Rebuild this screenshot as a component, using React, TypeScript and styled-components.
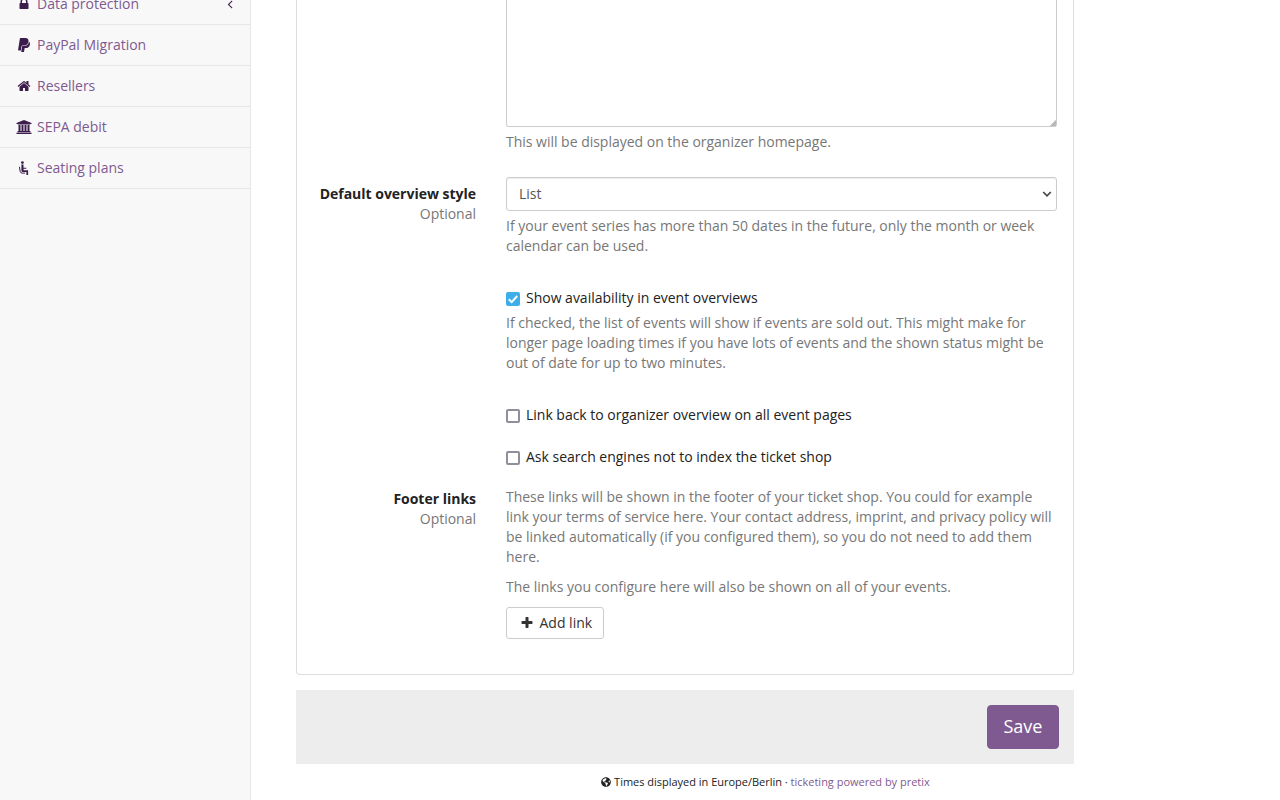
import React from "react";
import styled, { createGlobalStyle } from "styled-components";
import { FaGlobeAmericas } from "react-icons/fa";

const Global = createGlobalStyle`
  *, *::before, *::after { box-sizing: border-box; }
  body {
    margin: 0;
    background: #fff;
    color: #222;
    font: 14px/20px "Open Sans", "Noto Sans", sans-serif;
    letter-spacing: -0.012px;
  }
`;

const Page = styled.div`
  display: flex;
  height: 800px;
  overflow: hidden;
`;

const Sidebar = styled.nav`
  flex: 0 0 251px;
  background: #f8f8f8;
  border-right: 1px solid #e7e7e7;
`;

const NavItem = styled.a<{ $clipped?: boolean }>`
  display: flex;
  align-items: center;
  height: 41px;
  margin-top: ${(p) => (p.$clipped ? "-16px" : "0")};
  padding: 0 13px 0 15px;
  border-bottom: 1px solid #e7e7e7;
  color: #7f5a91;
  text-decoration: none;
`;

const NavIcon = styled.span`
  display: flex;
  justify-content: center;
  width: 18px;
  margin-right: 4px;
  color: #3b1c4a;
`;

const NavArrow = styled.span`
  display: flex;
  margin-left: auto;
  color: #3b1c4a;
`;

const Main = styled.main`
  flex: 1;
  padding-left: 45px;
`;

const Panel = styled.section`
  width: 778px;
  height: 675px;
  padding-right: 16px;
  border: 1px solid #ddd;
  border-top: 0;
  border-radius: 0 0 4px 4px;
`;

const Row = styled.div<{ $h: number }>`
  display: grid;
  grid-template-columns: 179px 551px;
  column-gap: 30px;
  height: ${(p) => p.$h}px;
`;

const Label = styled.div<{ $top: number }>`
  padding-top: ${(p) => p.$top}px;
  text-align: right;
  font-weight: 700;
`;

const Optional = styled.div`
  color: #777;
  font-weight: 400;
`;

const Field = styled.div`
  grid-column: 2;
`;

const TextBox = styled.div`
  position: relative;
  height: 127px;
`;

const TextArea = styled.textarea`
  display: block;
  width: 100%;
  height: 100%;
  border: 1px solid #ccc;
  border-top: 0;
  border-radius: 0 0 3px 3px;
  resize: none;
  background: #fff;
`;

const Grip = styled.svg`
  position: absolute;
  right: 1px;
  bottom: 1px;
`;

const Help = styled.p<{ $top?: number }>`
  margin: ${(p) => p.$top ?? 5}px 0 0;
  color: #777;
`;

const Select = styled.div`
  display: flex;
  align-items: center;
  justify-content: space-between;
  height: 34px;
  padding: 0 4px 0 12px;
  border: 1px solid #ccc;
  border-radius: 3px;
  box-shadow: inset 0 1px 1px rgba(0, 0, 0, 0.075);
  color: #555;
`;

const CheckLabel = styled.label`
  display: flex;
  align-items: center;
  gap: 6px;
  height: 20px;
`;

const Box = styled.span<{ $on?: boolean }>`
  display: flex;
  width: 14px;
  height: 14px;
  margin-top: 2px;
  border: ${(p) => (p.$on ? "0" : "2px solid #8f8f9d")};
  border-radius: 2px;
  background: ${(p) => (p.$on ? "#3daee9" : "#fff")};
`;

const AddButton = styled.button`
  display: flex;
  align-items: center;
  gap: 5.5px;
  width: 98px;
  height: 32px;
  margin-top: 10px;
  padding: 0 0 0 13px;
  border: 1px solid #ccc;
  border-radius: 3px;
  background: #fff;
  color: #333;
  font: inherit;
`;

const SaveBar = styled.div`
  display: flex;
  justify-content: flex-end;
  width: 778px;
  height: 74px;
  margin-top: 15px;
  padding: 15px;
  background: #ededed;
`;

const SaveButton = styled.button`
  width: 72px;
  height: 44px;
  padding: 0 0 2px;
  border: 1px solid #7f5a91;
  border-radius: 4px;
  background: #7f5a91;
  color: #fff;
  font: 18px/24px "Open Sans", "Noto Sans", sans-serif;
`;

const Footer = styled.footer`
  display: flex;
  align-items: center;
  justify-content: center;
  height: 18px;
  margin-top: 9px;
  padding-right: 45px;
  font-size: 11px;
  white-space: pre;
`;

const FooterLink = styled.a`
  color: #7f5a91;
`;

const Glyph = ({ d, size = 14, box = 1792 }: { d: string; size?: number; box?: number }) => (
  <svg width={size} height={14} viewBox={`0 0 ${box} 1792`} fill="currentColor">
    <path d={d} />
  </svg>
);

const LOCK =
  "M640 768h512v-192q0-106-75-181t-181-75-181 75-75 181v192zm832 96v576q0 40-28 68t-68 28h-960q-40 0-68-28t-28-68v-576q0-40 28-68t68-28h32v-192q0-184 132-316t316-132 316 132 132 316v192h32q40 0 68 28t28 68z";
const PAYPAL =
  "M1647 646q18 84-4 204-87 444-565 444h-44q-25 0-44 16.5t-24 42.5l-4 19-55 346-2 15q-5 26-24.5 42.5t-44.5 16.5h-251q-21 0-33-15t-9-36q9-56 26.5-168t26.5-168 27-167.5 27-167.5q5-37 43-37h131q133 2 236-21 175-39 287-144 102-95 155-246 24-70 35-133 1-6 2.5-7.5t3.5-1 6 3.5q79 59 98 162zm-172-282q0 107-46 236-80 233-302 315-113 40-252 42 0 1-90 1l-90-1q-100 0-118 96-2 8-85 530-1 10-12 10h-295q-22 0-36.5-16.5t-11.5-38.5l232-1471q5-29 27.5-48t51.5-19h598q34 0 97.5 13t111.5 32q107 41 163.5 123t56.5 196z";
const HOME =
  "M1472 992v480q0 26-19 45t-45 19h-384v-384h-256v384h-384q-26 0-45-19t-19-45v-480q0-1 .5-3t.5-3l575-474 575 474q1 2 1 6zm223-69l-62 74q-8 9-21 11h-3q-13 0-21-7l-692-577-692 577q-12 8-24 7-13-2-21-11l-62-74q-8-10-7-23.5t11-21.5l719-599q32-26 76-26t76 26l244 204v-195q0-14 9-23t23-9h192q14 0 23 9t9 23v408l219 182q10 8 11 21.5t-7 23.5z";
const BANK =
  "M960 0l960 384v128h-128q0 26-20.5 45t-48.5 19h-1526q-28 0-48.5-19t-20.5-45h-128v-128zm-704 640h256v768h128v-768h256v768h128v-768h256v768h128v-768h256v768h59q28 0 48.5 19t20.5 45v64h-1664v-64q0-26 20.5-45t48.5-19h59v-768zm1595 960q28 0 48.5 19t20.5 45v128h-1920v-128q0-26 20.5-45t48.5-19h1782z";
const PLUS =
  "M1600 736v192q0 40-28 68t-68 28h-416v416q0 40-28 68t-68 28h-192q-40 0-68-28t-28-68v-416h-416q-40 0-68-28t-28-68v-192q0-40 28-68t68-28h416v-416q0-40 28-68t68-28h192q40 0 68 28t28 68v416h416q40 0 68 28t28 68z";
const ANGLE =
  "M1203 544q0 13-10 23l-393 393 393 393q10 10 10 23t-10 23l-50 50q-10 10-23 10t-23-10l-466-466q-10-10-10-23t10-23l466-466q10-10 23-10t23 10l50 50q10 10 10 23z";

const Seat = () => (
  <svg width="16" height="14" viewBox="0 0 16 14" fill="none" stroke="currentColor">
    <circle cx="6.4" cy="1.6" r="1.4" fill="currentColor" stroke="none" />
    <path d="M5.4 3.6h2.1v3.2h2.8v1H7.6v1.4h4.5v5h-1.7v-3.1H6.9q-1.5 0-1.5-1.6z" fill="currentColor" stroke="none" />
    <path d="M3.4 5.8l.8 4.6q.3 1.7 1.9 1.7h3" strokeWidth="1" />
  </svg>
);

export default function App() {
  return (
    <>
      <Global />
      <Page>
        <Sidebar>
          <NavItem $clipped>
            <NavIcon><Glyph d={LOCK} /></NavIcon>
            Data protection
            <NavArrow><Glyph d={ANGLE} /></NavArrow>
          </NavItem>
          <NavItem>
            <NavIcon><Glyph d={PAYPAL} /></NavIcon>
            PayPal Migration
          </NavItem>
          <NavItem>
            <NavIcon><Glyph d={HOME} /></NavIcon>
            Resellers
          </NavItem>
          <NavItem>
            <NavIcon><Glyph d={BANK} size={16} box={1920} /></NavIcon>
            SEPA debit
          </NavItem>
          <NavItem>
            <NavIcon><Seat /></NavIcon>
            Seating plans
          </NavItem>
        </Sidebar>
        <Main>
          <Panel>
            <Row $h={177}>
              <Field>
                <TextBox>
                  <TextArea />
                  <Grip width="7" height="7" viewBox="0 0 7 7">
                    <path d="M7 0.5V7H0.5z" fill="#c4c4c4" />
                    <path d="M3 7L7 3M5.5 7L7 5.5" stroke="#999" strokeWidth="0.7" />
                  </Grip>
                </TextBox>
                <Help>This will be displayed on the organizer homepage.</Help>
              </Field>
            </Row>
            <Row $h={111}>
              <Label $top={7}>
                Default overview style
                <Optional>Optional</Optional>
              </Label>
              <Field>
                <Select>
                  List
                  <svg width="10" height="8" viewBox="0 0 10 8" fill="none" stroke="#444" strokeWidth="1.7">
                    <path d="M1.2 2L5 5.8 8.8 2" />
                  </svg>
                </Select>
                <Help>
                  If your event series has more than 50 dates in the future, only the month or week
                  <br />
                  calendar can be used.
                </Help>
              </Field>
            </Row>
            <Row $h={117}>
              <Field>
                <CheckLabel>
                  <Box $on>
                    <svg width="14" height="14" viewBox="0 0 14 14" fill="none" stroke="#fff" strokeWidth="2">
                      <path d="M2.8 7.2l2.9 2.9L11.2 4" />
                    </svg>
                  </Box>
                  Show availability in event overviews
                </CheckLabel>
                <Help>
                  If checked, the list of events will show if events are sold out. This might make for
                  <br />
                  longer page loading times if you have lots of events and the shown status might be
                  <br />
                  out of date for up to two minutes.
                </Help>
              </Field>
            </Row>
            <Row $h={42}>
              <Field>
                <CheckLabel><Box />Link back to organizer overview on all event pages</CheckLabel>
              </Field>
            </Row>
            <Row $h={40}>
              <Field>
                <CheckLabel><Box />Ask search engines not to index the ticket shop</CheckLabel>
              </Field>
            </Row>
            <Row $h={152}>
              <Label $top={2}>
                Footer links
                <Optional>Optional</Optional>
              </Label>
              <Field>
                <Help $top={0}>
                  These links will be shown in the footer of your ticket shop. You could for example
                  <br />
                  link your terms of service here. Your contact address, imprint, and privacy policy will
                  <br />
                  be linked automatically (if you configured them), so you do not need to add them
                  <br />
                  here.
                </Help>
                <Help $top={10}>The links you configure here will also be shown on all of your events.</Help>
                <AddButton><Glyph d={PLUS} />Add link</AddButton>
              </Field>
            </Row>
          </Panel>
          <SaveBar>
            <SaveButton>Save</SaveButton>
          </SaveBar>
          <Footer>
            <FaGlobeAmericas size={10} />
            <span> Times displayed in Europe/Berlin · </span>
            <FooterLink>ticketing powered by pretix</FooterLink>
          </Footer>
        </Main>
      </Page>
    </>
  );
}
